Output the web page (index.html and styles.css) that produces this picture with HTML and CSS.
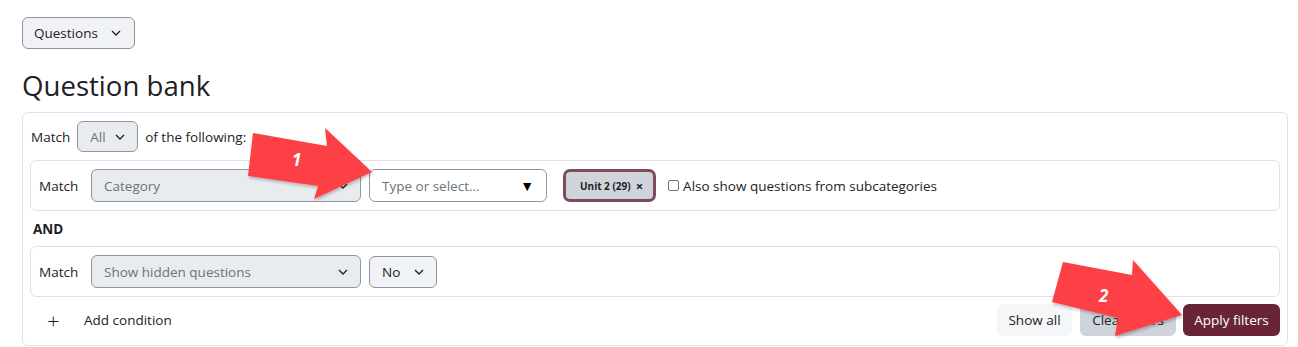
FILE: index.html
```html
<!DOCTYPE html>
<html>
<head>
<meta charset="utf-8">
<link rel="stylesheet" href="styles.css">
</head>
<body>
<div class="page">
  <button class="btn-menu">Questions <svg class="chev" viewBox="0 0 10 6"><path d="M1 1l4 4 4-4" fill="none" stroke="#1d2125" stroke-width="1.3"/></svg></button>
  <h2 class="title">Question bank</h2>
  <div class="filters">
    <div class="match-row">
      <span>Match</span>
      <div class="select sel-all"><span class="muted">All</span><svg class="chev" viewBox="0 0 10 6"><path d="M1 1l4 4 4-4" fill="none" stroke="#1d2125" stroke-width="1.3"/></svg></div>
      <span>of the following:</span>
    </div>
    <div class="card">
      <span class="lbl">Match</span>
      <div class="select sel-wide disabled"><span class="muted">Category</span><svg class="chev" viewBox="0 0 10 6"><path d="M1 1l4 4 4-4" fill="none" stroke="#1d2125" stroke-width="1.3"/></svg></div>
      <div class="select sel-type"><span class="muted">Type or select...</span><span class="tri">▼</span></div>
      <span class="chip">Unit 2 (29) <span class="x">×</span></span>
      <label class="check"><span class="box"></span>Also show questions from subcategories</label>
    </div>
    <div class="and">AND</div>
    <div class="card">
      <span class="lbl">Match</span>
      <div class="select sel-wide disabled"><span class="muted">Show hidden questions</span><svg class="chev" viewBox="0 0 10 6"><path d="M1 1l4 4 4-4" fill="none" stroke="#1d2125" stroke-width="1.3"/></svg></div>
      <div class="select sel-no"><span>No</span><svg class="chev" viewBox="0 0 10 6"><path d="M1 1l4 4 4-4" fill="none" stroke="#1d2125" stroke-width="1.3"/></svg></div>
    </div>
    <div class="foot">
      <div class="add"><span class="plus">+</span><span>Add condition</span></div>
      <div class="actions">
        <button class="b b-light">Show all</button>
        <button class="b b-gray">Clear filters</button>
        <button class="b b-primary">Apply filters</button>
      </div>
    </div>
  </div>
</div>
<svg class="arrows" width="1298" height="347" viewBox="0 0 1298 347">
  <defs>
    <filter id="sh" x="-20%" y="-20%" width="140%" height="140%"><feDropShadow dx="1" dy="2" stdDeviation="1.5" flood-color="#000" flood-opacity="0.25"/></filter>
  </defs>
  <polygon filter="url(#sh)" fill="#fd4044" points="253,133 327,146 325,128 372,172 314,199 318,186 248,176"/>
  <text x="292" y="166" class="num">1</text>
  <polygon filter="url(#sh)" fill="#fd4044" points="1063,262 1132,275 1133,260 1182,315 1115,336 1118,318 1052,302"/>
  <text x="1099" y="302" class="num">2</text>
</svg>
</body>
</html>
```
FILE: styles.css
```css
* { box-sizing: border-box; }
body {
  margin: 0;
  font-family: "Open Sans", "Liberation Sans", sans-serif;
  font-size: 13.5px;
  color: #1d2125;
  background: #fff;
}
.page { padding: 17px 10px 0 22px; }
.btn-menu {
  display: inline-flex; align-items: center; gap: 13px;
  height: 32px; padding: 0 13px 0 11px;
  font: inherit; color: #1d2125;
  background: #f0f2f5; border: 1px solid #8f959e; border-radius: 6px;
}
.chev { width: 10px; height: 6px; }
.title {
  margin: 20px 0 10px;
  font-size: 27.6px; font-weight: 400; line-height: 1.2;
  color: #1d2125;
}
.filters {
  border: 1px solid #dee2e6; border-radius: 6px;
  padding: 8px 7px 9px;
}
.match-row { display: flex; align-items: center; gap: 7px; padding-left: 1px; height: 31px; }
.select {
  display: flex; align-items: center; justify-content: space-between;
  height: 33px; padding: 0 12px;
  border: 1px solid #8f959e; border-radius: 6px; background: #fff;
  white-space: nowrap;
}
.sel-all { width: 61px; height: 31px; background: #e9ecef; }
.muted { color: #6a737b; }
.card {
  display: flex; align-items: center;
  border: 1px solid #dee2e6; border-radius: 6px;
  padding: 8px; margin-top: 8px;
}
.lbl { width: 52px; }
.disabled { background: #e9ecef; }
.sel-wide { width: 270px; margin-right: 8px; }
.sel-type { width: 178px; }
.tri { font-size: 14px; color: #000; }
.sel-no { width: 68px; height: 32px; background: #f0f2f5; }
.chip {
  display: inline-flex; align-items: center; gap: 5px;
  margin-left: 16px; height: 33px; padding: 0 10px 0 14px;
  background: #ced4da; border: 3px solid #7e4a5d; border-radius: 7px;
  font-size: 10px; font-weight: 700; white-space: nowrap;
}
.chip .x { font-size: 13px; font-weight: 700; }
.check { display: flex; align-items: center; margin-left: 12px; white-space: nowrap; }
.box {
  width: 11px; height: 11px; border: 1px solid #6a737b; border-radius: 2px;
  margin-right: 4px;
}
.and { font-weight: 700; margin: 9px 0 8px 3px; line-height: 18px; }
.foot { display: flex; justify-content: space-between; align-items: center; margin-top: 7px; }
.add { display: flex; align-items: center; padding-left: 17px; }
.plus { font-size: 22px; font-weight: 300; width: 37px; line-height: 1; }
.actions { display: flex; gap: 8px; }
.b {
  height: 32px; padding: 0; font: inherit; white-space: nowrap;
  border: 0; border-radius: 6px;
}
.b-light { background: #f5f6f8; color: #1d2125; width: 75px; }
.b-gray { background: #ced4da; color: #1d2125; width: 96px; margin-right: -1px; }
.b-primary { background: #6a2438; color: #fff; width: 97px; }
.arrows { position: absolute; left: 0; top: 0; pointer-events: none; }
.num { font-family: "Open Sans", sans-serif; font-weight: 700; font-style: italic; font-size: 17px; fill: #fff; }
```
